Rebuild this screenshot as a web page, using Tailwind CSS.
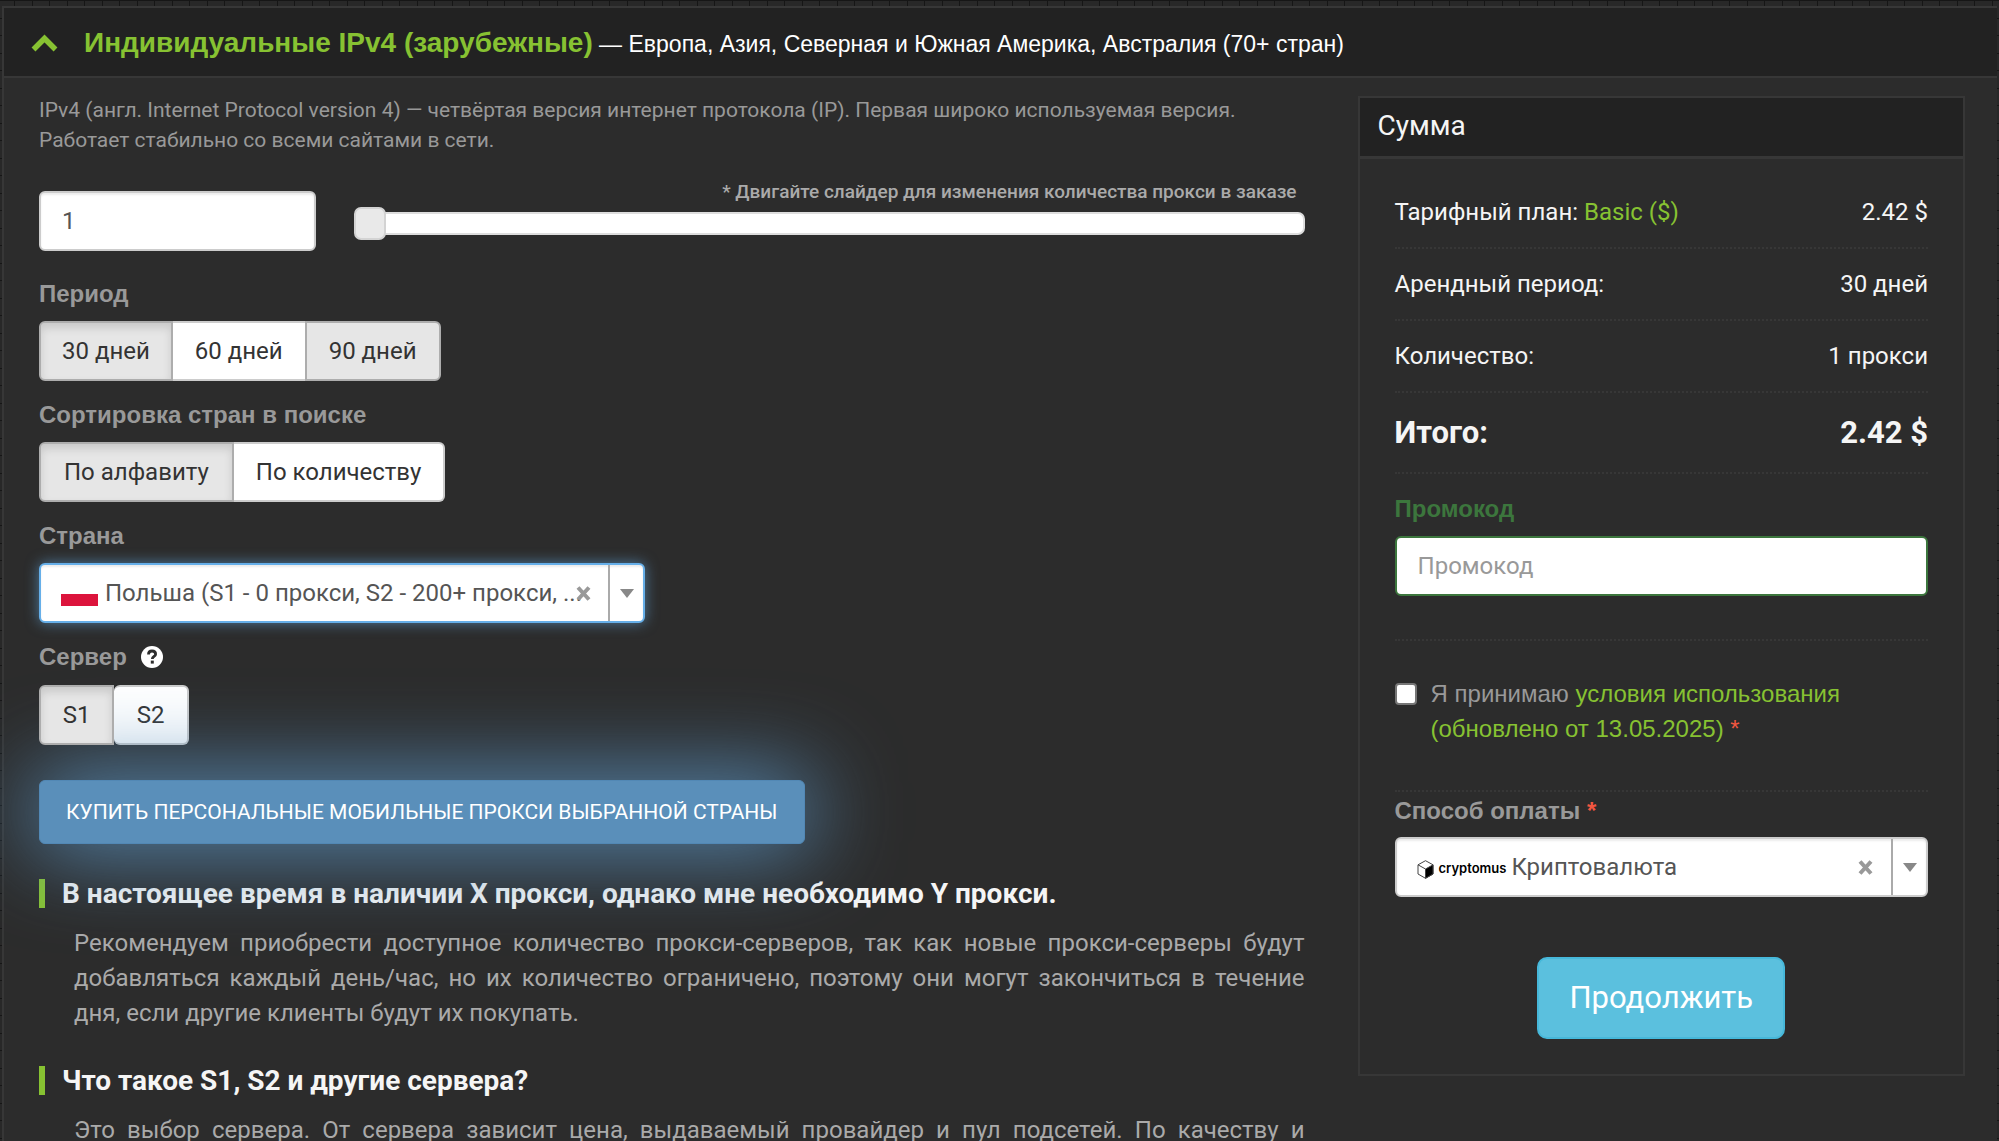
<!DOCTYPE html>
<html lang="ru">
<head>
    <meta charset="UTF-8">
    <meta name="viewport" content="width=device-width, initial-scale=1.0">
    <title>Индивидуальные IPv4</title>
    <script src="https://cdn.jsdelivr.net/npm/@tailwindcss/browser@4"></script>
</head>
<body class="h-screen overflow-hidden flex flex-col pt-[6px] px-[2px] bg-[#282828] bg-[repeating-linear-gradient(90deg,transparent_0px,transparent_14px,#161616_14px,#161616_15px,transparent_15px,transparent_32px,#161616_32px,#161616_33px,transparent_33px,transparent_35px),repeating-linear-gradient(#161616_0px,#161616_1px,transparent_1px,transparent_18px,#161616_18px,#161616_19px,transparent_19px,transparent_35px)] font-[Roboto,'Liberation_Sans',sans-serif] text-2xl text-[#999]">
    <div class="flex-1 border-t-2 border-l-2 border-[#373737] bg-[#2c2c2c]">
        <header class="flex items-center h-[70px] pt-[2px] border-b-2 border-[#373737] bg-[#222] pl-[27px] font-['Liberation_Sans',Arial,sans-serif]">
            <button type="button" aria-label="Свернуть" class="mr-[26px]">
                <svg class="w-[27px] h-[18px]" viewBox="0 0 27 18" fill="none" stroke="#87c232" stroke-width="5.5"><path d="M2.5 15.5 13.5 4.5 24.5 15.5"/></svg>
            </button>
            <h1 class="text-[23px] text-white whitespace-nowrap"><span class="text-[28px] font-bold text-[#87c232]">Индивидуальные IPv4 (зарубежные)</span> — Европа, Азия, Северная и Южная Америка, Австралия (70+ стран)</h1>
        </header>

        <div class="grid grid-cols-[25fr_12fr] items-start gap-[53px] pl-[35px] pr-8 pt-[17px]">
            <!-- Order form -->
            <main class="min-w-0">
                <p class="text-[21px] leading-[30px]">IPv4 (англ. Internet Protocol version 4) — четвёртая версия интернет протокола (IP). Первая широко используемая версия.<br>Работает стабильно со всеми сайтами в сети.</p>

                <div class="flex items-start mt-[25px] gap-[38px]">
                    <input type="text" value="1" aria-label="Количество прокси" class="w-[277px] h-[60px] mt-[11px] px-[21px] rounded-[6px] border-2 border-[#ccc] bg-white text-[#555] shadow-[inset_0_2px_2px_rgba(0,0,0,0.075)] outline-none">
                    <div class="flex-1 flex flex-col">
                        <label for="amount" class="self-end pr-2 mb-[3px] text-[19px] leading-6 font-medium text-[#aaa]">* Двигайте слайдер для изменения количества прокси в заказе</label>
                        <input id="amount" type="range" min="1" max="200" value="1" class="appearance-none w-full h-[33px] bg-transparent outline-none [&::-webkit-slider-runnable-track]:h-[23px] [&::-webkit-slider-runnable-track]:rounded-[7px] [&::-webkit-slider-runnable-track]:border-2 [&::-webkit-slider-runnable-track]:border-[#ddd] [&::-webkit-slider-runnable-track]:bg-white [&::-webkit-slider-thumb]:appearance-none [&::-webkit-slider-thumb]:w-8 [&::-webkit-slider-thumb]:h-[33px] [&::-webkit-slider-thumb]:-mt-[7px] [&::-webkit-slider-thumb]:-ml-[2px] [&::-webkit-slider-thumb]:rounded-[7px] [&::-webkit-slider-thumb]:border-2 [&::-webkit-slider-thumb]:border-[#d3d3d3] [&::-webkit-slider-thumb]:bg-[#e9e9e9]">
                    </div>
                </div>

                <div class="flex flex-col gap-[17px] mt-[26px]">
                    <div>
                        <div id="period-label" class="mb-[10px] leading-[34px] font-bold font-['Liberation_Sans',Arial,sans-serif]">Период</div>
                        <div role="group" aria-labelledby="period-label" class="flex text-[#333]">
                            <button type="button" class="h-[60px] px-[21px] rounded-l-[6px] border-2 border-[#adadad] bg-[#e6e6e6] shadow-[inset_0_5px_9px_rgba(0,0,0,0.125)]">30 дней</button>
                            <button type="button" class="h-[60px] px-[22px] border-y-2 border-[#ccc] bg-white">60 дней</button>
                            <button type="button" class="h-[60px] px-[22px] rounded-r-[6px] border-2 border-[#adadad] bg-[#e6e6e6]">90 дней</button>
                        </div>
                    </div>
                    <div>
                        <div id="sort-label" class="mb-[10px] leading-[34px] font-bold font-['Liberation_Sans',Arial,sans-serif]">Сортировка стран в поиске</div>
                        <div role="group" aria-labelledby="sort-label" class="flex text-[#333]">
                            <button type="button" class="h-[60px] px-[23px] rounded-l-[6px] border-2 border-[#adadad] bg-[#e6e6e6] shadow-[inset_0_5px_9px_rgba(0,0,0,0.125)]">По алфавиту</button>
                            <button type="button" class="h-[60px] px-[22px] rounded-r-[6px] border-2 border-l-0 border-[#ccc] bg-white">По количеству</button>
                        </div>
                    </div>
                    <div>
                        <label for="country" class="block mb-[10px] leading-[34px] font-bold font-['Liberation_Sans',Arial,sans-serif]">Страна</label>
                        <div class="flex items-center w-[606px] h-[60px] pl-5 rounded-[6px] border-2 border-[#66afe9] bg-white text-[#555] shadow-[inset_0_2px_2px_rgba(0,0,0,0.075),0_0_14px_rgba(102,175,233,0.6)]">
                            <svg class="w-[37px] h-6 shrink-0 mt-[2px]" viewBox="0 0 37 24"><rect width="37" height="12" fill="#fff"/><rect y="12" width="37" height="12" fill="#dc143c"/></svg>
                            <select id="country" class="appearance-none flex-1 min-w-0 h-full pl-[7px] bg-transparent outline-none">
                                <option>Польша (S1 - 0 прокси, S2 - 200+ прокси, ...</option>
                            </select>
                            <button type="button" aria-label="Очистить" class="relative -ml-5 mr-[17px] shrink-0">
                                <svg class="w-[15px] h-[15px]" viewBox="0 0 15 15" stroke="#999" stroke-width="4"><path d="M2 1.500 13 13.500M13 1.500 2 13.500"/></svg>
                            </button>
                            <span class="flex items-center justify-center w-[35px] h-full border-l-2 border-[#aaa]">
                                <svg class="w-[14px] h-[9px]" viewBox="0 0 14 9" fill="#888"><path d="M0 0H14L7 9Z"/></svg>
                            </span>
                        </div>
                    </div>
                    <div>
                        <div class="flex items-center mb-[11px] leading-[34px]">
                            <span id="server-label" class="font-bold font-['Liberation_Sans',Arial,sans-serif]">Сервер</span>
                            <svg class="ml-[14px] w-[22px] h-[22px]" viewBox="0 0 22 22"><circle cx="11" cy="11" r="11" fill="#fff"/><path d="M7.500 8.500C7.500 6 9 5 11 5S14.600 6 14.600 8.200C14.600 10.500 11.300 10.300 11.300 13" fill="none" stroke="#2c2c2c" stroke-width="2.800"/><rect x="9.800" y="14.600" width="3" height="3" fill="#2c2c2c"/></svg>
                        </div>
                        <div role="group" aria-labelledby="server-label" class="flex text-[#333]">
                            <button type="button" class="relative z-20 w-[75px] h-[60px] rounded-l-[6px] border-2 border-[#adadad] bg-[#e6e6e6] shadow-[inset_0_5px_9px_rgba(0,0,0,0.125)]">S1</button>
                            <button type="button" class="w-[75px] h-[60px] rounded-[6px] border-2 border-l-0 border-[#ccc] bg-white">S2</button>
                        </div>
                    </div>
                </div>

                <button type="button" class="relative z-10 mt-[35px] h-16 px-[26px] rounded-[6px] border border-[#5288b5] bg-[#5a8fba] text-[21px] text-white shadow-[0_0_88px_6px_#5a8fba]">КУПИТЬ ПЕРСОНАЛЬНЫЕ МОБИЛЬНЫЕ ПРОКСИ ВЫБРАННОЙ СТРАНЫ</button>

                <section class="mt-[35px]">
                    <h2 class="pl-[17px] border-l-[6px] border-[#87c232] text-[28px] leading-[29px] font-bold text-[#f5f5f5]">В настоящее время в наличии X прокси, однако мне необходимо Y прокси.</h2>
                    <p class="mt-[18px] pl-[35px] leading-[35px] text-justify text-[#aaa]">Рекомендуем приобрести доступное количество прокси-серверов, так как новые прокси-серверы будут добавляться каждый день/час, но их количество ограничено, поэтому они могут закончиться в течение дня, если другие клиенты будут их покупать.</p>
                </section>
                <section class="mt-[35px]">
                    <h2 class="pl-[17px] border-l-[6px] border-[#87c232] text-[28px] leading-[29px] font-bold text-[#f5f5f5]">Что такое S1, S2 и другие сервера?</h2>
                    <p class="mt-[18px] pl-[35px] leading-[35px] text-justify [text-align-last:justify] text-[#aaa]">Это выбор сервера. От сервера зависит цена, выдаваемый провайдер и пул подсетей. По качеству и</p>
                </section>
            </main>

            <!-- Order summary -->
            <aside class="mt-[1px] border-2 border-[#373737]">
                <h2 class="h-[61px] pl-[18px] pb-[2px] flex items-center border-b-[3px] border-[#373737] bg-[#222] text-[28px] text-[#f5f5f5]">Сумма</h2>
                <div class="px-[35px] pt-[18px] pb-[35px]">
                    <dl class="text-[#f5f5f5]">
                        <div class="flex items-center justify-between h-[72px] border-b-2 border-dotted border-[#373737]">
                            <dt>Тарифный план: <a href="#" class="text-[#87c232]">Basic ($)</a></dt>
                            <dd>2.42 $</dd>
                        </div>
                        <div class="flex items-center justify-between h-[72px] border-b-2 border-dotted border-[#373737]">
                            <dt>Арендный период:</dt>
                            <dd>30 дней</dd>
                        </div>
                        <div class="flex items-center justify-between h-[72px] border-b-2 border-dotted border-[#373737]">
                            <dt>Количество:</dt>
                            <dd>1 прокси</dd>
                        </div>
                        <div class="flex items-center justify-between h-[81px] border-b-2 border-dotted border-[#373737] text-[31px] font-bold">
                            <dt>Итого:</dt>
                            <dd>2.42 $</dd>
                        </div>
                    </dl>

                    <div class="pt-[18px] pb-[43px] border-b-2 border-dotted border-[#373737]">
                        <label for="promo" class="block mb-[10px] leading-[34px] font-bold text-[#3c763d] font-['Liberation_Sans',Arial,sans-serif]">Промокод</label>
                        <input id="promo" type="text" placeholder="Промокод" class="w-full h-[60px] px-[21px] rounded-[6px] border-2 border-[#3c763d] bg-white text-[#555] placeholder:text-[#999] outline-none">
                    </div>

                    <div class="flex items-start gap-[14px] pt-[35px] pb-11 border-b-2 border-dotted border-[#373737]">
                        <input id="terms" type="checkbox" class="appearance-none shrink-0 w-[22px] h-[22px] mt-[7px] rounded-[4px] border-2 border-[#767676] bg-white checked:bg-[#87c232]">
                        <label for="terms" class="leading-[35px] font-['Liberation_Sans',Arial,sans-serif]">Я принимаю <a href="#" class="text-[#87c232]">условия использования<br>(обновлено от 13.05.2025)</a> <span class="text-[#f25640]">*</span></label>
                    </div>

                    <label for="payment" class="block mt-[2px] mb-[9px] leading-[34px] font-bold font-['Liberation_Sans',Arial,sans-serif]">Способ оплаты <span class="text-[#f25640]">*</span></label>
                    <div class="flex items-center h-[60px] pl-5 rounded-[6px] border-2 border-[#ccc] bg-white text-[#555] shadow-[inset_0_2px_2px_rgba(0,0,0,0.075)]">
                        <svg class="w-[17px] h-[19px] shrink-0 mt-1" viewBox="0 0 17 19" fill="none" stroke="#444" stroke-width="1"><path d="M8.500.7 16 4.800V14L8.500 18.300 1 14V4.800ZM1 4.800 8.500 9"/><path d="M8.500 9 16 4.800V14L8.500 18.300Z" fill="#000"/></svg>
                        <span class="ml-[5px] mt-1 text-[13px] font-semibold text-black font-[Inter,sans-serif]">cryptomus</span>
                        <select id="payment" class="appearance-none flex-1 min-w-0 h-full pl-[5px] bg-transparent outline-none">
                            <option>Криптовалюта</option>
                        </select>
                        <button type="button" aria-label="Очистить" class="mr-[18px] shrink-0">
                            <svg class="w-[15px] h-[15px]" viewBox="0 0 15 15" stroke="#999" stroke-width="4"><path d="M2 1.500 13 13.500M13 1.500 2 13.500"/></svg>
                        </button>
                        <span class="flex items-center justify-center w-[35px] h-full border-l-2 border-[#aaa]">
                            <svg class="w-[14px] h-[9px]" viewBox="0 0 14 9" fill="#888"><path d="M0 0H14L7 9Z"/></svg>
                        </span>
                    </div>

                    <button type="submit" class="block mx-auto mt-[60px] h-[82px] px-[30px] rounded-[10px] border-2 border-[#46b8da] bg-[#5bc0de] text-[31px] text-white">Продолжить</button>
                </div>
            </aside>
        </div>
    </div>
</body>
</html>
